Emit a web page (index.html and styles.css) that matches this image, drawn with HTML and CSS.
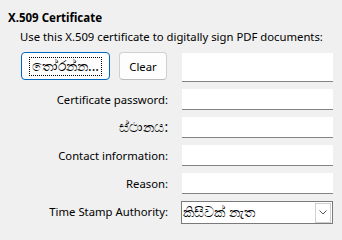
FILE: index.html
```html
<!DOCTYPE html>
<html>
<head>
<meta charset="utf-8">
<link rel="stylesheet" href="styles.css">
</head>
<body>
<div class="panel">
  <div class="title">X.509 Certificate</div>
  <div class="desc">Use this X.509 certificate to digitally sign PDF documents:</div>
  <div class="form">
    <div class="buttons">
      <button class="btn btn-default"><span class="focus si">තෝරන්න...</span></button>
      <button class="btn">Clear</button>
    </div>
    <div class="field field-tall"></div>

    <div class="label">Certificate password:</div>
    <div class="field"></div>

    <div class="label si">ස්ථානය:</div>
    <div class="field"></div>

    <div class="label">Contact information:</div>
    <div class="field"></div>

    <div class="label">Reason:</div>
    <div class="field"></div>

    <div class="label">Time Stamp Authority:</div>
    <div class="combo">
      <span class="combo-text si">කිසිවක් නැත</span>
      <span class="combo-btn">
        <svg width="8" height="5" viewBox="0 0 8 5"><path d="M0.5 0.5 L4 4 L7.5 0.5" fill="none" stroke="#5a5a5a" stroke-width="1"/></svg>
      </span>
    </div>
  </div>
</div>
</body>
</html>
```

FILE: styles.css
```css
html, body {
  margin: 0;
  padding: 0;
  background: #f0f0f0;
}
body {
  font-family: "Noto Sans", "Open Sans", sans-serif;
  font-size: 11.3px;
  color: #000;
  width: 342px;
  height: 231px;
  overflow: hidden;
}
.panel {
  padding: 10px 9px 0 8px;
}
.title {
  font-weight: bold;
  font-size: 11.5px;
  line-height: 16px;
  height: 16px;
}
.desc {
  margin-top: 3px;
  padding-left: 12px;
  line-height: 16px;
  height: 16px;
  white-space: nowrap;
}
.form {
  margin-top: 8px;
  display: grid;
  grid-template-columns: 148px 151px;
  column-gap: 14px;
  row-gap: 7px;
  margin-left: 12px;
  grid-auto-rows: 21px;
  grid-template-rows: 29px;
}
.buttons {
  display: flex;
  gap: 9px;
  align-items: flex-start;
  margin-left: 1px;
  margin-top: -1px;
}
.btn {
  height: 28px;
  box-sizing: border-box;
  border: 1px solid #d0d0d0;
  border-bottom-color: #bcbcbc;
  border-radius: 4px;
  background: #fdfdfd;
  font-family: "Noto Sans", "Open Sans", sans-serif;
  font-size: 11.3px;
  color: #000;
  padding: 0;
  width: 48px;
  display: flex;
  align-items: center;
  justify-content: center;
}
.btn-default {
  width: 89px;
  border: 1px solid #0067c0;
}
.focus {
  display: flex;
  align-items: center;
  justify-content: center;
  width: 71px;
  height: 17px;
  box-sizing: border-box;
  outline: 1px dotted #000;
  line-height: 15px;
}
.si {
  font-size: 13.5px;
}
.label {
  text-align: right;
  line-height: 21px;
  white-space: nowrap;
}
.field {
  background: #fff;
  border-bottom: 1px solid #838383;
  box-sizing: border-box;
}
.combo {
  background: #fff;
  border: 1px solid #7a7a7a;
  box-sizing: border-box;
  height: 23px;
  margin-left: -1px;
  display: flex;
  align-items: center;
  padding: 0 1px;
}
.combo-text {
  flex: 1;
  line-height: 19px;
}
.combo-btn {
  width: 16px;
  height: 20px;
  box-sizing: border-box;
  border: 1px solid #cfcfcf;
  display: flex;
  align-items: center;
  justify-content: center;
  background: #fff;
}
```
